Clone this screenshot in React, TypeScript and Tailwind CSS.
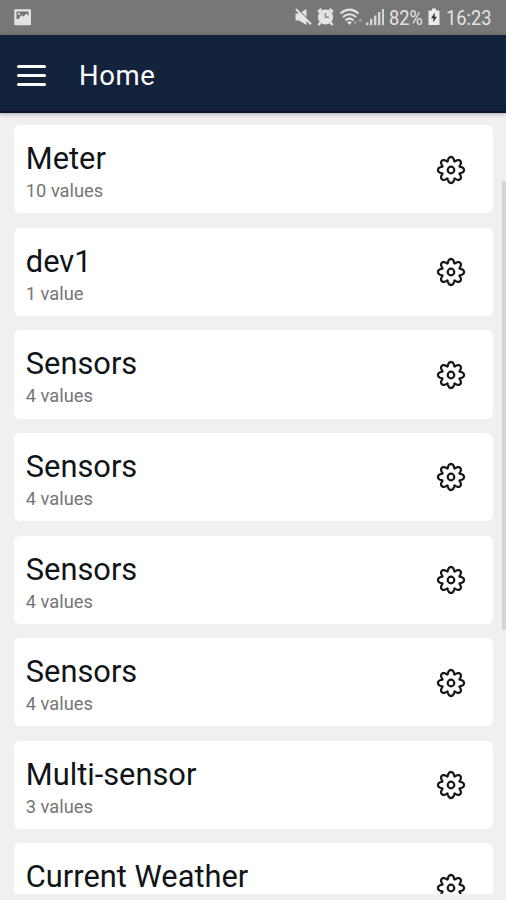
const devices = [
  { name: "Meter", values: "10 values" },
  { name: "dev1", values: "1 value" },
  { name: "Sensors", values: "4 values" },
  { name: "Sensors", values: "4 values" },
  { name: "Sensors", values: "4 values" },
  { name: "Sensors", values: "4 values" },
  { name: "Multi-sensor", values: "3 values" },
  { name: "Current Weather", values: "" },
];

// eight rounded teeth around a 30x30 box
function gearOutline() {
  const points: string[] = [];
  for (let i = 0; i < 160; i++) {
    const t = (i / 160) * Math.PI * 2;
    const r = 11.1 + 1.95 * Math.cos(8 * t);
    const a = t + 0.055 * Math.sin(8 * t);
    points.push(`${(15 + r * Math.sin(a)).toFixed(2)} ${(15 - r * Math.cos(a)).toFixed(2)}`);
  }
  return `M${points.join("L")}Z`;
}

const gearPath = gearOutline();

function GearIcon() {
  return (
    <svg viewBox="0 0 30 30" className="h-[30px] w-[30px]" fill="none" stroke="#15191e" strokeWidth="2.2" strokeLinejoin="round">
      <path d={gearPath} />
      <circle cx="15" cy="15" r="3.3" />
    </svg>
  );
}

function StatusBar() {
  return (
    <div className="flex h-[34.5px] shrink-0 items-center bg-[#777777] pl-[14px] text-[#e4e4e4]">
      <svg viewBox="0 0 18 17" className="h-[17px] w-[18px]">
        <rect x="0.3" y="0.3" width="16.7" height="16" rx="1" fill="#e2e2e2" />
        <path d="M2.5 10V2.5H14.5V7L12.5 4.5L9.5 7.5L7.5 6L4.5 10Z" fill="#747474" />
        <circle cx="5.2" cy="4.9" r="1.1" fill="#e2e2e2" />
      </svg>
      <svg viewBox="0 0 91 22" className="ml-[262px] h-[22px] w-[91px] shrink-0" fill="#e4e4e4">
        {/* muted speaker */}
        <path d="M1.5 7.5H5L12.5 3V19L5 14.5H1.5Z" />
        <path d="M3.5 3L17 16.5" stroke="#777777" strokeWidth="1.2" />
        <path d="M2 3.2L17 18.2" stroke="#e4e4e4" strokeWidth="2" />
        {/* alarm clock */}
        <circle cx="31.5" cy="11" r="7.6" />
        <path d="M24 6L27.5 3M39 6L35.5 3M26.5 16.5L24.5 19M36.5 16.5L38.5 19" stroke="#e4e4e4" strokeWidth="2.4" />
        <path d="M31.5 7V11.3H35" fill="none" stroke="#8a8a8a" strokeWidth="1.5" />
        {/* wifi */}
        <g fill="none" stroke="#e4e4e4" strokeWidth="2">
          <path d="M46.5 7.5Q55.5 -0.2 64.5 7.5" />
          <path d="M49 11Q55.5 5.5 62 11" />
          <path d="M51.5 14.3Q55.5 11 59.5 14.3" />
        </g>
        <path d="M53.2 16.3Q55.5 14.4 57.8 16.3L55.5 19Z" />
        <path d="M59 15.5L61 18.5L63 15.5ZM64 15.5L66.2 12L68.4 15.5Z" opacity="0.4" />
        {/* signal */}
        <path d="M72 16.5h2.4v2.8H72zM76 13h2.4v6.3H76zM80 9.5h2.4v9.8H80zM84 6h2.4v13.3H84zM88 3h2v16.3h-2z" opacity="0.85" />
      </svg>
      <span className="ml-[4px] w-[34px] origin-left scale-x-[0.89] whitespace-nowrap pt-[1px] text-[20.5px] leading-none">82%</span>
      <svg viewBox="0 0 12 18" className="ml-[5px] h-[18px] w-[12px] shrink-0">
        <path d="M4 0.5H8V2.5H11.5V17H0.5V2.5H4Z" fill="#ececec" />
        <path d="M6.8 4.5L3 10.3H5.6L5 14.5L9 8.7H6.5Z" fill="#303030" />
      </svg>
      <span className="ml-[6px] origin-left scale-x-[0.89] whitespace-nowrap pt-[1px] text-[20.5px] leading-none">16:23</span>
    </div>
  );
}

export default function App() {
  return (
    <div className="flex h-[900px] w-[506px] flex-col overflow-hidden bg-[#f0f0f0] font-[Roboto,sans-serif]">
      <StatusBar />
      <header className="z-10 flex h-[78px] shrink-0 items-center border-b-2 border-[#0b1429] bg-[#14233c] pt-[5px] pl-[17px] shadow-[0_1px_4px_rgba(0,0,0,0.3)]">
        <button aria-label="Menu" className="mt-[1px] flex w-[29px] flex-col gap-[5.5px]">
          <span className="h-[3.3px] rounded-xs bg-white" />
          <span className="h-[3.3px] rounded-xs bg-white" />
          <span className="h-[3.3px] rounded-xs bg-white" />
        </button>
        <h1 className="mt-[2px] ml-[33px] text-[27.5px] leading-none font-[450] tracking-[0.6px] text-white">Home</h1>
      </header>
      <main className="flex h-[781px] shrink-0 overflow-hidden pl-[14.3px]">
        <ul className="flex w-[478.5px] shrink-0 flex-col gap-[14.4px] pt-[12.5px]">
          {devices.map((device, i) => (
            <li key={i} className="flex h-[88.25px] shrink-0 justify-between rounded-[6px] bg-white pr-[27.2px] pl-[11.5px]">
              <div className="pt-[16px]">
                <h2 className="text-[30.8px] leading-[36px] text-[#101418]">{device.name}</h2>
                {device.values && <p className="mt-[2px] text-[18.3px] leading-[24px] text-[#757575]">{device.values}</p>}
              </div>
              <div className="pt-[29.5px]">
                <GearIcon />
              </div>
            </li>
          ))}
        </ul>
        <div className="mt-[68px] ml-auto h-[449px] w-[4.5px] bg-[#d5d5d5]" />
      </main>
    </div>
  );
}
